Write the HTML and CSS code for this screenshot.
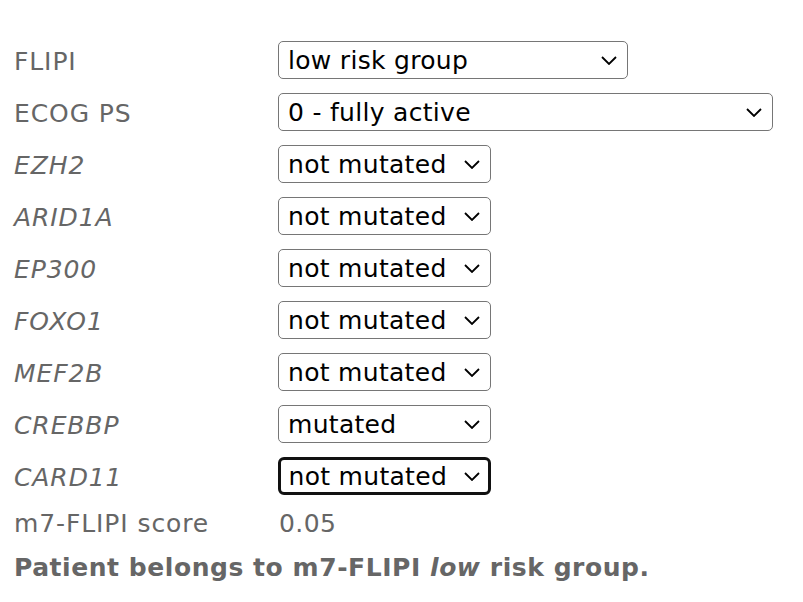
FILE: index.html
```html
<!DOCTYPE html>
<html lang="en">
<head>
<meta charset="utf-8">
<title>m7-FLIPI calculator</title>
<link rel="stylesheet" href="styles.css">
</head>
<body>
<div class="calc">
  <div class="form">
    <label class="lbl field" for="flipi">FLIPI</label>
    <select id="flipi" class="sel sel-flipi"><option>low risk group</option><option>high risk group</option></select>

    <label class="lbl field" for="ecog">ECOG PS</label>
    <select id="ecog" class="sel sel-ecog"><option>0 - fully active</option></select>

    <label class="lbl field gene" for="ezh2">EZH2</label>
    <select id="ezh2" class="sel sel-gene"><option>not mutated</option><option>mutated</option></select>

    <label class="lbl field gene" for="arid1a">ARID1A</label>
    <select id="arid1a" class="sel sel-gene"><option>not mutated</option><option>mutated</option></select>

    <label class="lbl field gene" for="ep300">EP300</label>
    <select id="ep300" class="sel sel-gene"><option>not mutated</option><option>mutated</option></select>

    <label class="lbl field gene" for="foxo1">FOXO1</label>
    <select id="foxo1" class="sel sel-gene"><option>not mutated</option><option>mutated</option></select>

    <label class="lbl field gene" for="mef2b">MEF2B</label>
    <select id="mef2b" class="sel sel-gene"><option>not mutated</option><option>mutated</option></select>

    <label class="lbl field gene" for="crebbp">CREBBP</label>
    <select id="crebbp" class="sel sel-gene"><option>mutated</option><option>not mutated</option></select>

    <label class="lbl field gene" for="card11">CARD11</label>
    <select id="card11" class="sel sel-gene sel-focus"><option>not mutated</option><option>mutated</option></select>

    <span class="lbl">m7-FLIPI score</span>
    <span class="score-val">0.05</span>
  </div>
  <p class="result">Patient belongs to m7-FLIPI <em>low</em> risk group.</p>
</div>
</body>
</html>
```

FILE: styles.css
```css
html, body {
  margin: 0;
  padding: 0;
  background: #ffffff;
}

.calc {
  padding: 41px 0 0 14px;
  font-family: "DejaVu Sans", Verdana, sans-serif;
  font-size: 25px;
  color: #666666;
}

.form {
  display: grid;
  grid-template-columns: 264px auto;
  row-gap: 14px;
  align-items: center;
  justify-items: start;
}

.lbl {
  line-height: 30px;
  letter-spacing: 0.9px;
}

.field {
  padding-top: 3px;
}

.gene {
  font-style: italic;
}

.sel {
  appearance: none;
  -webkit-appearance: none;
  box-sizing: border-box;
  height: 38px;
  margin: 0;
  padding: 0 0 0 9px;
  font-family: "DejaVu Sans", Verdana, sans-serif;
  font-size: 25px;
  letter-spacing: 0.3px;
  color: #000000;
  background-color: #ffffff;
  background-image: url("data:image/svg+xml;utf8,<svg xmlns='http://www.w3.org/2000/svg' width='16' height='9' viewBox='0 0 16 9'><polyline points='1,1 8,8 15,1' fill='none' stroke='black' stroke-width='1.8'/></svg>");
  background-repeat: no-repeat;
  background-position: right 10px center;
  background-size: 16px 9px;
  border: 1.5px solid #767676;
  border-radius: 5px;
  outline: none;
}

.sel-flipi { width: 350px; }
.sel-ecog { width: 495px; }
.sel-gene { width: 213px; }

.sel-focus {
  border: 3px solid #111111;
  border-radius: 6px;
  padding-left: 7.5px;
  background-position: right 8.5px center;
}

.score-val {
  line-height: 30px;
  padding-left: 1px;
  letter-spacing: 0.4px;
}

.result {
  margin: 14px 0 0 0;
  font-weight: bold;
  line-height: 30px;
  letter-spacing: 0.55px;
}

.result em {
  font-style: italic;
}
```
